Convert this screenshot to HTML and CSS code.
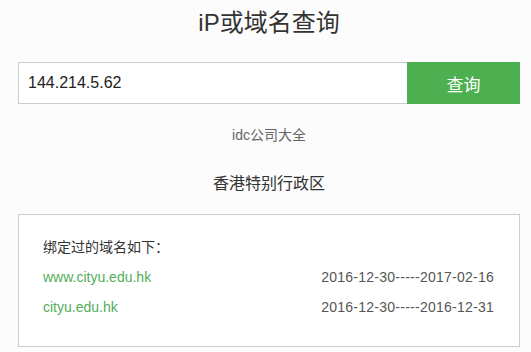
FILE: index.html
```html
<!DOCTYPE html>
<html lang="zh-CN">
<head>
    <meta charset="UTF-8">
    <meta name="viewport" content="width=device-width, initial-scale=1.0">
    <title>iP或域名查询</title>
    <link rel="stylesheet" href="styles.css">
</head>
<body>

    <div class="container">
        <h1>iP或域名查询</h1>

        <form class="search-form">
            <input type="text" class="search-input" value="144.214.5.62">
            <button type="button" class="search-btn">查询</button>
        </form>

        <p class="idc-link">idc公司大全</p>

        <h2 class="region">香港特别行政区</h2>

        <div class="result-box">
            <p class="result-title">绑定过的域名如下：</p>
            <div class="domain-row">
                <a href="#" class="domain">www.cityu.edu.hk</a>
                <span class="date">2016-12-30-----2017-02-16</span>
            </div>
            <div class="domain-row">
                <a href="#" class="domain">cityu.edu.hk</a>
                <span class="date">2016-12-30-----2016-12-31</span>
            </div>
        </div>
    </div>

</body>
</html>
```

FILE: styles.css
```css
body {
    font-family: 'Liberation Sans', Arial, 'Noto Sans CJK SC', sans-serif;
    background-color: #fcfcfc;
    color: #333;
    margin: 0;
    padding: 0;
}

.container {
    padding: 0 11px 0 18px;
}

h1 {
    margin: 0;
    padding-top: 8px;
    font-size: 24px;
    font-weight: normal;
    line-height: 30px;
    text-align: center;
    color: #333;
}

.search-form {
    display: flex;
    height: 42px;
    margin: 24px 0 0;
}

.search-input {
    flex: 1;
    min-width: 0;
    box-sizing: border-box;
    height: 42px;
    margin: 0;
    padding: 0 9px;
    border: 1px solid #ccc;
    border-right: none;
    background-color: #fff;
    font-family: inherit;
    font-size: 16px;
    color: #222;
    outline: none;
}

.search-btn {
    width: 113px;
    height: 42px;
    margin: 0;
    border: none;
    background-color: #4caf50;
    color: #fff;
    font-family: inherit;
    font-size: 17px;
    cursor: pointer;
}

.idc-link {
    margin: 21px 0 0;
    font-size: 14px;
    line-height: 20px;
    text-align: center;
    color: #666;
}

.region {
    margin: 27px 0 0;
    font-size: 16px;
    font-weight: normal;
    line-height: 24px;
    text-align: center;
    color: #333;
}

.result-box {
    margin-top: 18px;
    padding: 17px 25px 24px 24px;
    border: 1px solid #ccc;
    background-color: #fff;
}

.result-title {
    margin: 0;
    font-family: 'Liberation Sans', Arial, 'Noto Sans CJK TC', sans-serif;
    font-size: 14px;
    line-height: 30px;
    color: #333;
}

.domain-row {
    display: flex;
    justify-content: space-between;
    font-size: 14px;
    line-height: 30px;
}

    .domain-row .domain {
        color: #52ad5a;
        text-decoration: none;
    }

    .domain-row .date {
        color: #555;
        letter-spacing: 0.25px;
    }
```
